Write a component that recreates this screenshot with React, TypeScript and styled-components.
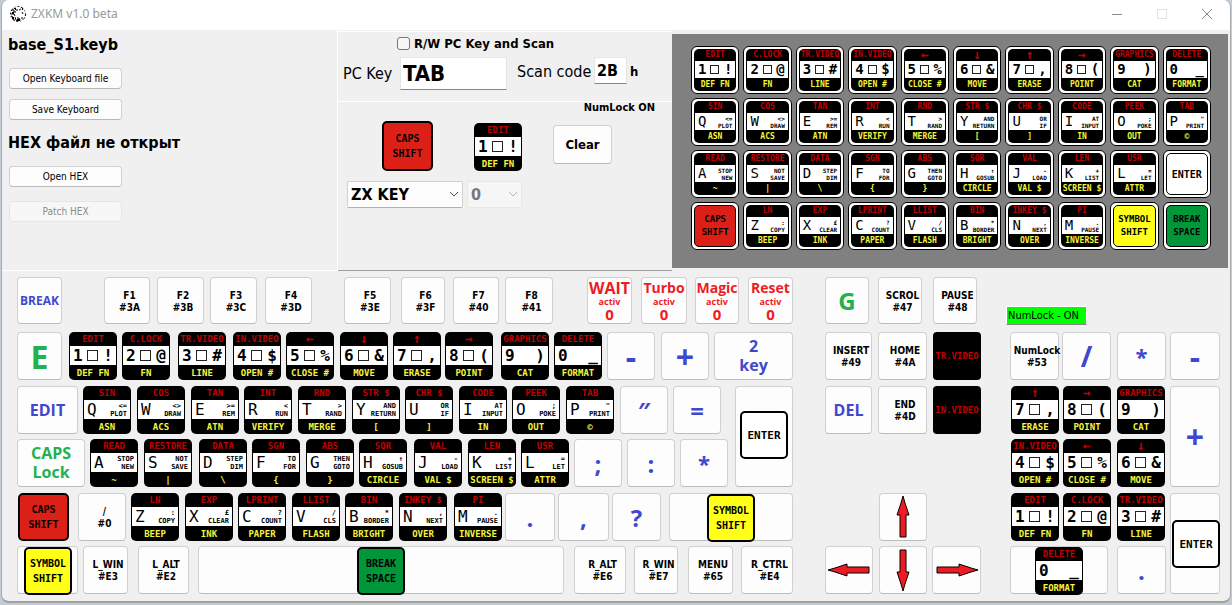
import React from "react";
import styled, { createGlobalStyle, css } from "styled-components";

const ui = `"DejaVu Sans Condensed", "Noto Sans", sans-serif`;
const humanist = `"Noto Sans", "Open Sans", sans-serif`;
const rounded = `"Open Sans", "Noto Sans", sans-serif`;
const mono = `"DejaVu Sans Mono", monospace`;

const GlobalStyle = createGlobalStyle`
  * { box-sizing: border-box; }
  body { margin: 0; background: #c3ccd4; font-family: ${ui}; color: #000; }
  button, input, select { font-family: inherit; color: inherit; margin: 0; padding: 0; }
`;

/* ---------- window frame ---------- */

const Window = styled.div`
  display: flex;
  flex-direction: column;
  margin: 0 1px 2px;
  background: #f0f0f0;
  border: 1px solid #a5adb3;
  border-top: 0;
  border-bottom: 2px solid #a0a0a0;
  border-radius: 8px;
  overflow: hidden;
`;

const TitleBar = styled.header`
  display: flex;
  align-items: center;
  height: 30px;
  padding: 0 17px 2px 7px;
  background: #fff;
`;

const Title = styled.h1`
  flex: 1;
  margin: 0 0 0 4px;
  font: 12px/18px ${humanist};
  color: #999;
`;

const WindowButtons = styled.div`
  display: flex;
  gap: 33px;
`;

const WindowButton = styled.button`
  width: 12px;
  height: 12px;
  border: 0;
  background: none;
  svg { display: block; }
`;

/* ---------- upper panels ---------- */

const Panels = styled.main`
  display: grid;
  grid-template-columns: 336fr 334fr 558fr;
  min-height: 241px;
`;

const FilePanel = styled.section`
  padding: 4px 0 0 6px;
  border-right: 1px solid #fff;
  border-bottom: 1px solid #fff;
`;

const Heading = styled.h2`
  margin: 0;
  font: bold 16px/22px ${ui};
  white-space: nowrap;
`;

const Stack = styled.div<{ $gap: number }>`
  display: flex;
  flex-direction: column;
  align-items: flex-start;
  gap: ${(p) => p.$gap}px;
  padding: 12px 0 12px 1px;
`;

const FileButton = styled.button`
  width: 113px;
  height: 21px;
  border: 1px solid #d0d0d0;
  border-bottom-color: #b8b8b8;
  border-radius: 4px;
  background: #fdfdfd;
  font-size: 10px;
  &:disabled { color: #8b8b8b; background: #f7f7f7; border-color: #e6e6e6; }
`;

const EditPanel = styled.section`
  border-top: 1px solid #fff;
  margin-top: 1px;
  border-bottom: 1px solid #a0a0a0;
`;

const ScanGroup = styled.div`
  height: 70px;
  border-bottom: 1px solid #fff;
  padding-top: 3px;
`;

const CheckLabel = styled.label`
  display: flex;
  align-items: center;
  gap: 4px;
  height: 17px;
  padding-left: 59px;
  font-weight: bold;
  font-size: 13px;
`;

const Check = styled.input`
  appearance: none;
  width: 13px;
  height: 13px;
  border: 1px solid #767676;
  border-radius: 3px;
  background: #f7f7f7;
`;

const ScanRow = styled.div`
  display: flex;
  align-items: center;
  padding: 5px 0 0 5px;
`;

const ScanLabel = styled.label`
  width: 57px;
  font-size: 16px;
  line-height: 20px;
  white-space: nowrap;
`;

const CodeLabel = styled(ScanLabel)`
  width: 77px;
  margin-left: 10px;
  padding-bottom: 4px;
`;

const Field = styled.input`
  width: 107px;
  height: 33px;
  padding-left: 2px;
  border: 1px solid #e5e5e5;
  border-bottom-color: #868686;
  background: #fff;
  font-weight: bold;
  font-size: 22px;
`;

const CodeField = styled(Field)`
  width: 33px;
  height: 27px;
  margin-bottom: 6px;
  font-size: 16px;
`;

const Unit = styled.span`
  margin-left: 3px;
  padding-bottom: 4px;
  font-weight: bold;
  font-size: 13px;
`;

const NumLockNote = styled.p`
  margin: 0;
  padding-right: 17px;
  text-align: right;
  font: bold 11px/12px ${ui};
`;

const Assigned = styled.div`
  display: flex;
  align-items: flex-start;
  height: 67px;
  padding: 7px 0 0 44px;
`;

const AssignedSlot = styled.div`
  width: 48px;
  height: 48px;
  margin: 2px 31px 0 41px;
`;

const CapsSlot = styled.div`
  width: 51px;
  height: 50px;
`;

const ClearButton = styled.button`
  width: 59px;
  height: 39px;
  margin-top: 4px;
  border: 1px solid #d0d0d0;
  border-bottom-color: #b8b8b8;
  border-radius: 4px;
  background: #fdfdfd;
  font-weight: bold;
  font-size: 13px;
`;

const SelectRow = styled.div`
  display: flex;
  gap: 4px;
  padding-left: 9px;
`;

const SelectBox = styled.div<{ $w: number; $dim?: boolean }>`
  position: relative;
  width: ${(p) => p.$w}px;
  color: ${(p) => (p.$dim ? "#777" : "#000")};
  select {
    appearance: none;
    width: 100%;
    height: 27px;
    padding-left: 3px;
    border: 1px solid ${(p) => (p.$dim ? "#e8e8e8" : "#d0d0d0")};
    border-bottom-color: ${(p) => (p.$dim ? "#e8e8e8" : "#b0b0b0")};
    border-radius: 2px;
    background: ${(p) => (p.$dim ? "#f6f6f6" : "#fdfdfd")};
    font-weight: bold;
    font-size: 16px;
    opacity: 1;
  }
  svg {
    position: absolute;
    right: 4px;
    top: 10px;
    color: ${(p) => (p.$dim ? "#b5b5b5" : "#555")};
    pointer-events: none;
  }
`;

const Preview = styled.section`
  display: grid;
  grid-template-columns: repeat(10, 1fr);
  grid-auto-rows: 48px;
  gap: 4px;
  align-content: start;
  margin: 4px 2px 3px 0;
  padding: 12px 17px 10px 19px;
  background: #808080;
`;

const PreviewKey = styled.div`
  display: flex;
  padding: 2px;
  border: 1px solid #000;
  border-radius: 6px;
  background: #fff;
`;

/* ---------- keys ---------- */

const ZxCap = styled.button<{ $small?: boolean }>`
  display: grid;
  grid-template-rows: ${(p) => (p.$small ? "12px 17px 13px" : "14px 19px 15px")};
  width: 100%;
  height: ${(p) => (p.$small ? "42px" : "48px")};
  border: 0;
  border-radius: 5px;
  background: #000;
  font: bold ${(p) => (p.$small ? 8 : 9)}px/12px ${mono};
  text-align: center;
  white-space: nowrap;
`;

const RedLegend = styled.span<{ $arrow: boolean }>`
  color: #c00000;
  place-self: center;
  ${(p) => p.$arrow && "font-size: 13px;"}
`;

const YellowLegend = styled.span`
  color: #f5f53c;
  place-self: center;
`;

const Face = styled.span<{ $small?: boolean }>`
  display: flex;
  align-items: center;
  margin: 0 1px;
  padding: 0 3px;
  background: #fff;
  color: #000;
  font-size: ${(p) => (p.$small ? 14 : 16)}px;
  line-height: 17px;
  min-width: 0;
`;

const Letter = styled.span<{ $bold?: boolean }>`
  font-weight: ${(p) => (p.$bold ? "bold" : "normal")};
`;

const Block = styled.span<{ $small?: boolean }>`
  width: ${(p) => (p.$small ? 9 : 11)}px;
  height: ${(p) => (p.$small ? 9 : 11)}px;
  margin-left: 4px;
  border: 1px solid #222;
`;

const Right = styled(Letter)`
  margin-left: auto;
`;

const Words = styled.span<{ $small?: boolean }>`
  flex: 1;
  min-width: 0;
  display: flex;
  flex-direction: column;
  align-items: flex-end;
  font-size: ${(p) => (p.$small ? 6 : 7)}px;
  line-height: ${(p) => (p.$small ? 7 : 8)}px;
`;

const solid = {
  caps: ["#dc2018", "CAPS", "SHIFT"],
  symbol: ["#ffff19", "SYMBOL", "SHIFT"],
  space: ["#009639", "BREAK", "SPACE"],
  enter: ["#ffffff", "ENTER"],
} as const;

type SolidName = keyof typeof solid;

const SolidCap = styled.button<{ $bg: string; $size: number; $small?: boolean }>`
  display: flex;
  flex-direction: column;
  align-items: center;
  justify-content: center;
  width: 100%;
  height: 100%;
  border: ${(p) => (p.$small ? 1 : 2)}px solid #000;
  border-radius: 5px;
  background: ${(p) => p.$bg};
  font: bold ${(p) => p.$size}px/${(p) => (p.$small ? 13 : 15)}px ${mono};
`;

const DarkCap = styled.button`
  width: 100%;
  height: 48px;
  border: 0;
  border-radius: 4px;
  background: #000;
  color: #c00000;
  font: bold 9px/12px ${mono};
`;

type Legend = [string, string, string, string];

const zx: Record<string, Legend> = {
  "1": ["EDIT", "□", "!", "DEF FN"],
  "2": ["C.LOCK", "□", "@", "FN"],
  "3": ["TR.VIDEO", "□", "#", "LINE"],
  "4": ["IN.VIDEO", "□", "$", "OPEN #"],
  "5": ["←", "□", "%", "CLOSE #"],
  "6": ["↓", "□", "&", "MOVE"],
  "7": ["↑", "□", ",", "ERASE"],
  "8": ["→", "□", "(", "POINT"],
  "9": ["GRAPHICS", "", ")", "CAT"],
  "0": ["DELETE", "", "_", "FORMAT"],
  Q: ["SIN", "<=", "PLOT", "ASN"],
  W: ["COS", "<>", "DRAW", "ACS"],
  E: ["TAN", ">=", "REM", "ATN"],
  R: ["INT", "<", "RUN", "VERIFY"],
  T: ["RND", ">", "RAND", "MERGE"],
  Y: ["STR $", "AND", "RETURN", "["],
  U: ["CHR $", "OR", "IF", "]"],
  I: ["CODE", "AT", "INPUT", "IN"],
  O: ["PEEK", ";", "POKE", "OUT"],
  P: ["TAB", "\"", "PRINT", "©"],
  A: ["READ", "STOP", "NEW", "~"],
  S: ["RESTORE", "NOT", "SAVE", "|"],
  D: ["DATA", "STEP", "DIM", "\\"],
  F: ["SGN", "TO", "FOR", "{"],
  G: ["ABS", "THEN", "GOTO", "}"],
  H: ["SQR", "↑", "GOSUB", "CIRCLE"],
  J: ["VAL", "-", "LOAD", "VAL $"],
  K: ["LEN", "+", "LIST", "SCREEN $"],
  L: ["USR", "=", "LET", "ATTR"],
  Z: ["LN", ":", "COPY", "BEEP"],
  X: ["EXP", "£", "CLEAR", "INK"],
  C: ["LPRINT", "?", "COUNT", "PAPER"],
  V: ["LLIST", "/", "CLS", "FLASH"],
  B: ["BIN", "*", "BORDER", "BRIGHT"],
  N: ["INKEY $", ",", "NEXT", "OVER"],
  M: ["PI", ".", "PAUSE", "INVERSE"],
};

function ZxKey({ id, small }: { id: string; small?: boolean }) {
  const [top, a, b, bottom] = zx[id];
  const digit = /\d/.test(id);
  return (
    <ZxCap type="button" $small={small}>
      <RedLegend $arrow={top.length === 1}>{top}</RedLegend>
      <Face $small={small}>
        <Letter $bold={digit}>{id}</Letter>
        {digit ? (
          <>
            {a && <Block $small={small} />}
            <Right $bold>{b}</Right>
          </>
        ) : (
          <Words $small={small}>
            <span>{a}</span>
            <span>{b}</span>
          </Words>
        )}
      </Face>
      <YellowLegend>{bottom}</YellowLegend>
    </ZxCap>
  );
}

function Solid({ name, small }: { name: SolidName; small?: boolean }) {
  const [bg, ...lines] = solid[name];
  const size = (small ? 9 : 10) + (lines.length === 1 ? 1 : 0);
  return (
    <SolidCap type="button" $bg={bg} $size={size} $small={small}>
      {lines.map((l) => (
        <span key={l}>{l}</span>
      ))}
    </SolidCap>
  );
}

/* ---------- PC keyboard ---------- */

const Keyboard = styled.section`
  display: flex;
  padding: 6px 10px 7px 15px;
`;

const Cluster = styled.div<{ $w: number; $gap?: number }>`
  flex: ${(p) => p.$w} 1 0;
  min-width: 0;
  margin-left: ${(p) => p.$gap ?? 0}px;
  display: flex;
  flex-direction: column;
  gap: 6px;
`;

const Row = styled.div`
  display: flex;
  height: 48px;
`;

const FunctionRow = styled(Row)`
  height: 47px;
  margin-bottom: 2px;
`;

const Rows = styled.div<{ $w?: number }>`
  flex: ${(p) => p.$w ?? 1} 1 0;
  min-width: 0;
  display: flex;
  flex-direction: column;
  gap: 5px;
`;

const RowPair = styled.div`
  display: flex;
`;

const Slot = styled.div<{ $w: number; $gap?: number }>`
  flex: ${(p) => p.$w} 1 0;
  min-width: 0;
  margin-left: ${(p) => p.$gap ?? 0}px;
`;

const keyFace = css`
  border: 1px solid #d0d0d0;
  border-bottom-color: #bcbcbc;
  border-radius: 4px;
  background: #fdfdfd;
`;

const KeyCap = styled.button`
  ${keyFace}
  display: flex;
  flex-direction: column;
  align-items: center;
  justify-content: center;
  width: 100%;
  height: 100%;
  white-space: nowrap;
`;

const PcCap = styled(KeyCap)`
  padding: 2px 0 0 5px;
  font: bold 10px/12px ${ui};
`;

const tones = { blue: "#3f48cc", green: "#22b14c", red: "#ed1c24" };

const ColorCap = styled(KeyCap)<{ $tone: keyof typeof tones; $size: number }>`
  color: ${(p) => tones[p.$tone]};
  font: bold ${(p) => p.$size}px/19px ${rounded};
`;

const SwitchCap = styled(ColorCap)`
  line-height: 16px;
`;

const Tiny = styled.span`
  font-size: 9px;
  line-height: 11px;
`;

const Count = styled.span`
  font-size: 15px;
  line-height: 15px;
`;

const Shelf = styled.div<{ $pad: number; $drop?: number }>`
  ${keyFace}
  width: 100%;
  height: 100%;
  padding: ${(p) => p.$drop ?? 0}px 0 0 ${(p) => p.$pad}px;
`;

const Holder = styled.div`
  width: 48px;
  height: 48px;
`;

const Status = styled.input`
  width: 81px;
  height: 19px;
  margin-top: 29px;
  padding-left: 1px;
  border: 1px solid #fff;
  border-bottom-color: #868686;
  background: #00ff00;
  font-size: 11px;
`;

const Arrow = ({ turn }: { turn: number }) => (
  <svg width="44" height="44" viewBox="0 0 44 44" aria-hidden="true">
    <path
      transform={`rotate(${turn} 22 22)`}
      d="M22 1 L24 8 L28 20 L25 20 V42 H19 V20 L16 20 L20 8 Z"
      fill="#ed1c24"
      stroke="#000"
      strokeWidth="1"
    />
  </svg>
);

type Item = { w: number; gap?: number; node?: React.ReactNode };

const z = (id: string, gap: number): Item => ({ w: 48, gap, node: <ZxKey id={id} /> });

const pc = (a: string, b: string, w: number, gap = 0): Item => ({
  w,
  gap,
  node: (
    <PcCap type="button">
      <span>{a}</span>
      <span>{b}</span>
    </PcCap>
  ),
});

const colored = (
  text: string[],
  tone: keyof typeof tones,
  size: number,
  w: number,
  gap = 0
): Item => ({
  w,
  gap,
  node: (
    <ColorCap type="button" $tone={tone} $size={size}>
      {text.map((t) => (
        <span key={t}>{t}</span>
      ))}
    </ColorCap>
  ),
});

const activ = (name: string, size: number, w: number, gap: number): Item => ({
  w,
  gap,
  node: (
    <SwitchCap type="button" $tone="red" $size={size}>
      <span>{name}</span>
      <Tiny>activ</Tiny>
      <Count>0</Count>
    </SwitchCap>
  ),
});

const arrow = (turn: number, label: string, w: number, gap: number): Item => ({
  w,
  gap,
  node: (
    <KeyCap type="button" aria-label={label}>
      <Arrow turn={turn} />
    </KeyCap>
  ),
});

const space = (w: number, gap = 0): Item => ({ w, gap });

function Slots({ items }: { items: Item[] }) {
  return (
    <>
      {items.map((it, i) => (
        <Slot key={i} $w={it.w} $gap={it.gap}>
          {it.node}
        </Slot>
      ))}
    </>
  );
}

const functionKeys = [
  colored(["BREAK"], "blue", 12, 45),
  pc("F1", "#3A", 46, 42),
  pc("F2", "#3B", 47, 7),
  pc("F3", "#3C", 47, 6),
  pc("F4", "#3D", 47, 8),
  pc("F5", "#3E", 47, 32),
  pc("F6", "#3F", 44, 10),
  pc("F7", "#40", 46, 8),
  pc("F8", "#41", 48, 6),
  activ("WAIT", 16, 45, 34),
  activ("Turbo", 14, 46, 9),
  activ("Magic", 14, 44, 8),
  activ("Reset", 14, 45, 9),
];

const digitKeys = [
  colored(["E"], "green", 32, 45),
  z("1", 7), z("2", 5), z("3", 8), z("4", 7), z("5", 5),
  z("6", 6), z("7", 5), z("8", 4), z("9", 8), z("0", 5),
  colored(["-"], "blue", 32, 48, 5),
  colored(["+"], "blue", 32, 48, 6),
  colored(["2", "key"], "blue", 16, 79, 5),
];

const qwertyKeys = [
  colored(["EDIT"], "blue", 16, 61),
  z("Q", 5), z("W", 6), z("E", 6), z("R", 5), z("T", 6),
  z("Y", 6), z("U", 5), z("I", 6), z("O", 5), z("P", 6),
  colored(["″"], "blue", 24, 48, 6),
  colored(["="], "blue", 24, 48, 5),
  space(7),
];

const homeKeys = [
  colored(["CAPS", "Lock"], "green", 16, 68),
  z("A", 5), z("S", 6), z("D", 7), z("F", 5), z("G", 6),
  z("H", 5), z("J", 7), z("K", 6), z("L", 5),
  colored([";"], "blue", 24, 48, 5),
  colored([":"], "blue", 24, 48, 5),
  colored(["*"], "blue", 22, 48, 5),
];

const bottomKeys: Item[] = [
  { w: 51, gap: 1, node: <Solid name="caps" /> },
  pc("/", "#0", 48, 9),
  z("Z", 5), z("X", 6), z("C", 5), z("V", 6), z("B", 5), z("N", 6), z("M", 7),
  colored(["."], "blue", 24, 50, 3),
  colored([","], "blue", 24, 51, 3),
  colored(["?"], "blue", 24, 49, 3),
  { w: 124, gap: 8, node: <Shelf $pad={37}><Holder><Solid name="symbol" /></Holder></Shelf> },
];

const spaceKeys: Item[] = [
  { w: 61, node: <Shelf $pad={6}><Holder><Solid name="symbol" /></Holder></Shelf> },
  pc("L_WIN", "#E3", 45, 5),
  pc("L_ALT", "#E2", 51, 10),
  { w: 366, gap: 9, node: <Shelf $pad={158}><Holder><Solid name="space" /></Holder></Shelf> },
  pc("R_ALT", "#E6", 52, 10),
  pc("R_WIN", "#E7", 44, 8),
  pc("MENU", "#65", 45, 10),
  pc("R_CTRL", "#E4", 52, 8),
];

const previewRows = ["1234567890", "QWERTYUIOP", "ASDFGHJKL", "ZXCVBNM"];

function PreviewPad() {
  const letters = (row: string) =>
    row.split("").map((k) => (
      <PreviewKey key={k}>
        <ZxKey id={k} small />
      </PreviewKey>
    ));
  const plain = (name: SolidName) => (
    <PreviewKey key={name}>
      <Solid name={name} small />
    </PreviewKey>
  );
  return (
    <Preview aria-label="ZX Spectrum keyboard">
      {letters(previewRows[0])}
      {letters(previewRows[1])}
      {letters(previewRows[2])}
      {plain("enter")}
      {plain("caps")}
      {letters(previewRows[3])}
      {plain("symbol")}
      {plain("space")}
    </Preview>
  );
}

const Chevron = () => (
  <svg width="10" height="7" viewBox="0 0 10 7" fill="none" stroke="currentColor" aria-hidden="true">
    <path d="M1 1 L5 5 L9 1" />
  </svg>
);

const AppIcon = () => (
  <svg width="18" height="18" viewBox="0 0 18 18" fill="none" stroke="#000" aria-hidden="true">
    <circle cx="9" cy="9" r="7.5" strokeDasharray="2 1.5 3 2 1 2" />
    <path d="M3 5h2v2h2M5 3l2 2h2M2 9h3l1 2M2 11l2 1 1 3M6 12l1 3 2 1M8 13h2l1 2M12 13l2 0M10 5l2-1M13 7l1 2" />
    <path strokeWidth="2" d="M3 8h2M6 4h1M8 15h3M3 13h2M13 4h1" />
  </svg>
);

export default function App() {
  return (
    <>
      <GlobalStyle />
      <Window>
        <TitleBar>
          <AppIcon />
          <Title>ZXKM v1.0 beta</Title>
          <WindowButtons>
            <WindowButton type="button" aria-label="Minimize">
              <svg width="12" height="12" stroke="#8a8a8a"><path d="M1 6.5H11" /></svg>
            </WindowButton>
            <WindowButton type="button" aria-label="Maximize" disabled>
              <svg width="12" height="12" stroke="#e2e2e2" fill="none"><rect x="1.5" y="1.5" width="9" height="9" /></svg>
            </WindowButton>
            <WindowButton type="button" aria-label="Close">
              <svg width="12" height="12" stroke="#8a8a8a"><path d="M1 1L11 11M11 1L1 11" /></svg>
            </WindowButton>
          </WindowButtons>
        </TitleBar>

        <Panels>
          <FilePanel>
            <Heading>base_S1.keyb</Heading>
            <Stack $gap={10}>
              <FileButton type="button">Open Keyboard file</FileButton>
              <FileButton type="button">Save Keyboard</FileButton>
            </Stack>
            <Heading>HEX файл не открыт</Heading>
            <Stack $gap={14}>
              <FileButton type="button">Open HEX</FileButton>
              <FileButton type="button" disabled>Patch HEX</FileButton>
            </Stack>
          </FilePanel>

          <EditPanel>
            <ScanGroup>
              <CheckLabel>
                <Check type="checkbox" />
                R/W PC Key and Scan
              </CheckLabel>
              <ScanRow>
                <ScanLabel htmlFor="pckey">PC Key</ScanLabel>
                <Field id="pckey" defaultValue="TAB" />
                <CodeLabel htmlFor="scan">Scan code</CodeLabel>
                <CodeField id="scan" defaultValue="2B" />
                <Unit>h</Unit>
              </ScanRow>
            </ScanGroup>
            <NumLockNote>NumLock ON</NumLockNote>
            <Assigned>
              <CapsSlot><Solid name="caps" /></CapsSlot>
              <AssignedSlot><ZxKey id="1" /></AssignedSlot>
              <ClearButton type="button">Clear</ClearButton>
            </Assigned>
            <SelectRow>
              <SelectBox $w={116}>
                <select aria-label="Key type"><option>ZX KEY</option></select>
                <Chevron />
              </SelectBox>
              <SelectBox $w={55} $dim>
                <select aria-label="Key number" disabled><option>0</option></select>
                <Chevron />
              </SelectBox>
            </SelectRow>
          </EditPanel>

          <PreviewPad />
        </Panels>

        <Keyboard>
          <Cluster $w={776}>
            <FunctionRow><Slots items={functionKeys} /></FunctionRow>
            <Row><Slots items={digitKeys} /></Row>
            <RowPair>
              <Rows $w={711}>
                <Row><Slots items={qwertyKeys} /></Row>
                <Row><Slots items={homeKeys} /></Row>
              </Rows>
              <Slot $w={58} $gap={7}>
                <Shelf $pad={4} $drop={24}><Holder><Solid name="enter" /></Holder></Shelf>
              </Slot>
            </RowPair>
            <Rows>
              <Row><Slots items={bottomKeys} /></Row>
              <Row><Slots items={spaceKeys} /></Row>
            </Rows>
          </Cluster>

          <Cluster $w={156} $gap={32}>
            <FunctionRow>
              <Slots
                items={[
                  colored(["G"], "green", 24, 44),
                  pc("SCROL", "#47", 44, 9),
                  pc("PAUSE", "#48", 44, 11),
                  space(4),
                ]}
              />
            </FunctionRow>
            <Row>
              <Slots
                items={[
                  pc("INSERT", "#49", 47),
                  pc("HOME", "#4A", 49, 6),
                  { w: 48, gap: 6, node: <DarkCap type="button">TR.VIDEO</DarkCap> },
                ]}
              />
            </Row>
            <Rows>
              <Row>
                <Slots
                  items={[
                    colored(["DEL"], "blue", 16, 47),
                    pc("END", "#4D", 49, 6),
                    { w: 48, gap: 6, node: <DarkCap type="button">IN.VIDEO</DarkCap> },
                  ]}
                />
              </Row>
              <Row />
            </Rows>
            <Rows>
              <Row>
                <Slots items={[space(48), arrow(0, "Up", 48, 6), space(49, 5)]} />
              </Row>
              <Row>
                <Slots
                  items={[
                    arrow(270, "Left", 48, 0),
                    arrow(180, "Down", 48, 6),
                    arrow(90, "Right", 49, 5),
                  ]}
                />
              </Row>
            </Rows>
          </Cluster>

          <Cluster $w={214} $gap={25}>
            <FunctionRow>
              <Status aria-label="NumLock state" readOnly value="NumLock - ON" />
            </FunctionRow>
            <Row>
              <Slots
                items={[
                  pc("NumLock", "#53", 49, 4),
                  colored(["/"], "blue", 28, 49, 3),
                  colored(["*"], "blue", 22, 49, 6),
                  colored(["-"], "blue", 32, 50, 4),
                ]}
              />
            </Row>
            <RowPair>
              <Rows $w={160}>
                <Row><Slots items={[z("7", 5), z("8", 4), z("9", 6), space(1)]} /></Row>
                <Row><Slots items={[z("4", 5), z("5", 4), z("6", 6), space(1)]} /></Row>
              </Rows>
              <Slots items={[colored(["+"], "blue", 32, 50, 4)]} />
            </RowPair>
            <RowPair>
              <Rows $w={160}>
                <Row><Slots items={[z("1", 5), z("2", 4), z("3", 6), space(1)]} /></Row>
                <Row>
                  <Slots
                    items={[
                      { w: 98, gap: 4, node: <Shelf $pad={24}><Holder><ZxKey id="0" /></Holder></Shelf> },
                      colored(["."], "blue", 24, 49, 9),
                    ]}
                  />
                </Row>
              </Rows>
              <Slot $w={50} $gap={4}>
                <Shelf $pad={1} $drop={26}><Holder><Solid name="enter" /></Holder></Shelf>
              </Slot>
            </RowPair>
          </Cluster>
        </Keyboard>
      </Window>
    </>
  );
}
